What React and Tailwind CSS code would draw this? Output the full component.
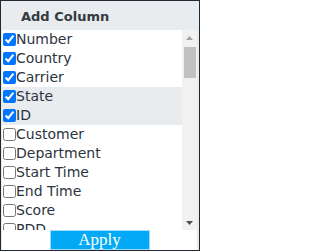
import { useState } from "react";

const COLUMNS = [
  { name: "Number", on: true },
  { name: "Country", on: true },
  { name: "Carrier", on: true },
  { name: "State", on: true, hl: true },
  { name: "ID", on: true, hl: true },
  { name: "Customer", on: false },
  { name: "Department", on: false },
  { name: "Start Time", on: false },
  { name: "End Time", on: false },
  { name: "Score", on: false },
  { name: "PDD", on: false },
  { name: "Duration", on: false },
];

function Row({ col }) {
  const [checked, setChecked] = useState(col.on);
  return (
    <label
      className={`flex items-center h-[19px] shrink-0 pl-px cursor-pointer ${
        col.hl ? "bg-[#e9ecef]" : ""
      }`}
    >
      <input
        type="checkbox"
        checked={checked}
        onChange={(e) => setChecked(e.target.checked)}
        className="m-0 w-[13px] h-[13px] shrink-0"
      />
      <span className="text-[14px] leading-[19px] text-[#2c3440] whitespace-nowrap">
        {col.name}
      </span>
    </label>
  );
}

function Scrollbar() {
  return (
    <div className="w-[15px] shrink-0 bg-[#f1f1f1] flex flex-col">
      <div className="h-[15px] flex items-center justify-center">
        <svg width="7" height="4" viewBox="0 0 7 4">
          <path d="M3.5 0 L7 4 L0 4 Z" fill="#a3a3a3" />
        </svg>
      </div>
      <div className="mt-[2px] ml-[2px] w-[12px] h-[31px] bg-[#c1c1c1]" />
      <div className="flex-1" />
      <div className="h-[15px] flex items-center justify-center">
        <svg width="7" height="4" viewBox="0 0 7 4">
          <path d="M0 0 L7 0 L3.5 4 Z" fill="#505050" />
        </svg>
      </div>
    </div>
  );
}

export default function App() {
  return (
    <div
      className="w-[200px] h-[251px] border border-[#1f2933] bg-[#e9ecef] flex flex-col"
      style={{ fontFamily: '"DejaVu Sans", sans-serif' }}
    >
      <div className="h-[29px] shrink-0 flex items-center pl-[20px] pt-[3px]">
        <span className="text-[13px] font-bold text-[#343a40]">Add Column</span>
      </div>
      <div className="flex-1 flex flex-col pl-px pr-[2px]">
        <div className="h-[200px] flex bg-white">
          <div className="flex-1 flex flex-col overflow-hidden">
            {COLUMNS.map((c) => (
              <Row key={c.name} col={c} />
            ))}
          </div>
          <Scrollbar />
        </div>
        <div className="h-[20px] bg-white flex justify-center">
          <button
            type="button"
            className="w-[100px] h-[20px] bg-[#03a9f4] border border-[#9fdcf9] text-white text-[17px] leading-[18px]"
            style={{ fontFamily: '"Liberation Serif", serif' }}
          >
            Apply
          </button>
        </div>
      </div>
    </div>
  );
}
